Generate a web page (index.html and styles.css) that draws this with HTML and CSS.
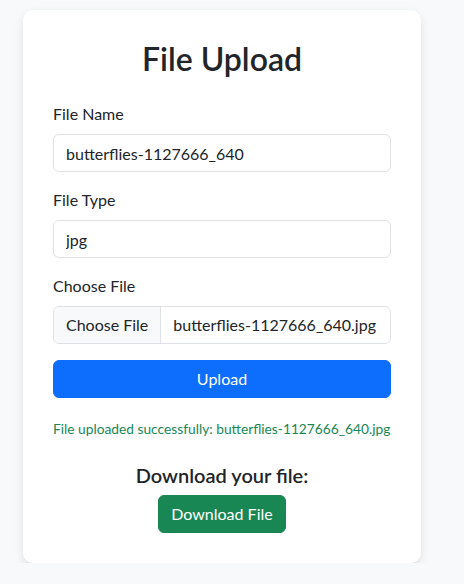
FILE: index.html
```html
<!DOCTYPE html>
<html lang="en">
<head>
<meta charset="utf-8">
<title>File Upload</title>
<link rel="stylesheet" href="styles.css">
</head>
<body>
<main class="page">
  <section class="card">
    <h2 class="title">File Upload</h2>
    <form class="form">
      <div class="field">
        <label class="label" for="fname">File Name</label>
        <input class="control" id="fname" type="text" value="butterflies-1127666_640">
      </div>
      <div class="field">
        <label class="label" for="ftype">File Type</label>
        <input class="control" id="ftype" type="text" value="jpg">
      </div>
      <div class="field">
        <span class="label">Choose File</span>
        <div class="file-control">
          <span class="file-btn">Choose File</span>
          <span class="file-name">butterflies-1127666_640.jpg</span>
        </div>
      </div>
      <button type="button" class="btn btn-primary">Upload</button>
    </form>
    <p class="success">File uploaded successfully: butterflies-1127666_640.jpg</p>
    <div class="download">
      <h5 class="download-title">Download your file:</h5>
      <a class="btn btn-success" href="#">Download File</a>
    </div>
  </section>
</main>
</body>
</html>
```
FILE: styles.css
```css
* { box-sizing: border-box; }
html, body { margin: 0; padding: 0; }
body {
  background: #f8f9fa;
  color: #212529;
  font-family: Lato, "Noto Sans", sans-serif;
  font-size: 16px;
  line-height: 1.5;
}
.page {
  padding: 10px 0 0 23px;
}
.card {
  width: 398px;
  background: #fff;
  border-radius: 10px;
  box-shadow: 0 4px 10px rgba(0,0,0,0.1);
  padding: 30px;
}
.title {
  margin: 0 0 24px;
  text-align: center;
  font-size: 32px;
  font-weight: 600;
  line-height: 1.2;
}
.form { display: flex; flex-direction: column; }
.field { display: flex; flex-direction: column; margin-bottom: 16px; }
.label { display: block; margin-bottom: 8px; font-size: 16px; line-height: 24px; }
.control {
  display: block;
  width: 100%;
  height: 38px;
  padding: 6px 12px;
  font: inherit;
  font-size: 16px;
  color: #212529;
  background: #fff;
  border: 1px solid #dee2e6;
  border-radius: 6px;
  outline: none;
}
.file-control {
  display: flex;
  height: 38px;
  border: 1px solid #dee2e6;
  border-radius: 6px;
  overflow: hidden;
}
.file-btn {
  padding: 6px 12px;
  background: #f8f9fa;
  border-right: 1px solid #dee2e6;
  white-space: nowrap;
}
.file-name {
  padding: 6px 12px;
  white-space: nowrap;
}
.btn {
  display: inline-block;
  height: 38px;
  padding: 6px 12px;
  font: inherit;
  font-size: 16px;
  line-height: 24px;
  color: #fff;
  border: 1px solid transparent;
  border-radius: 6px;
  text-align: center;
  text-decoration: none;
}
.btn-primary { width: 100%; background: #0d6efd; border-color: #0d6efd; }
.btn-success { background: #198754; border-color: #198754; }
.success {
  margin: 20px 0 0;
  color: #198754;
  font-size: 13.75px;
  line-height: 21px;
  white-space: nowrap;
}
.download {
  margin-top: 24px;
  text-align: center;
}
.download-title {
  margin: 0 0 8px;
  font-size: 20px;
  font-weight: 600;
  line-height: 1.2;
}
```
